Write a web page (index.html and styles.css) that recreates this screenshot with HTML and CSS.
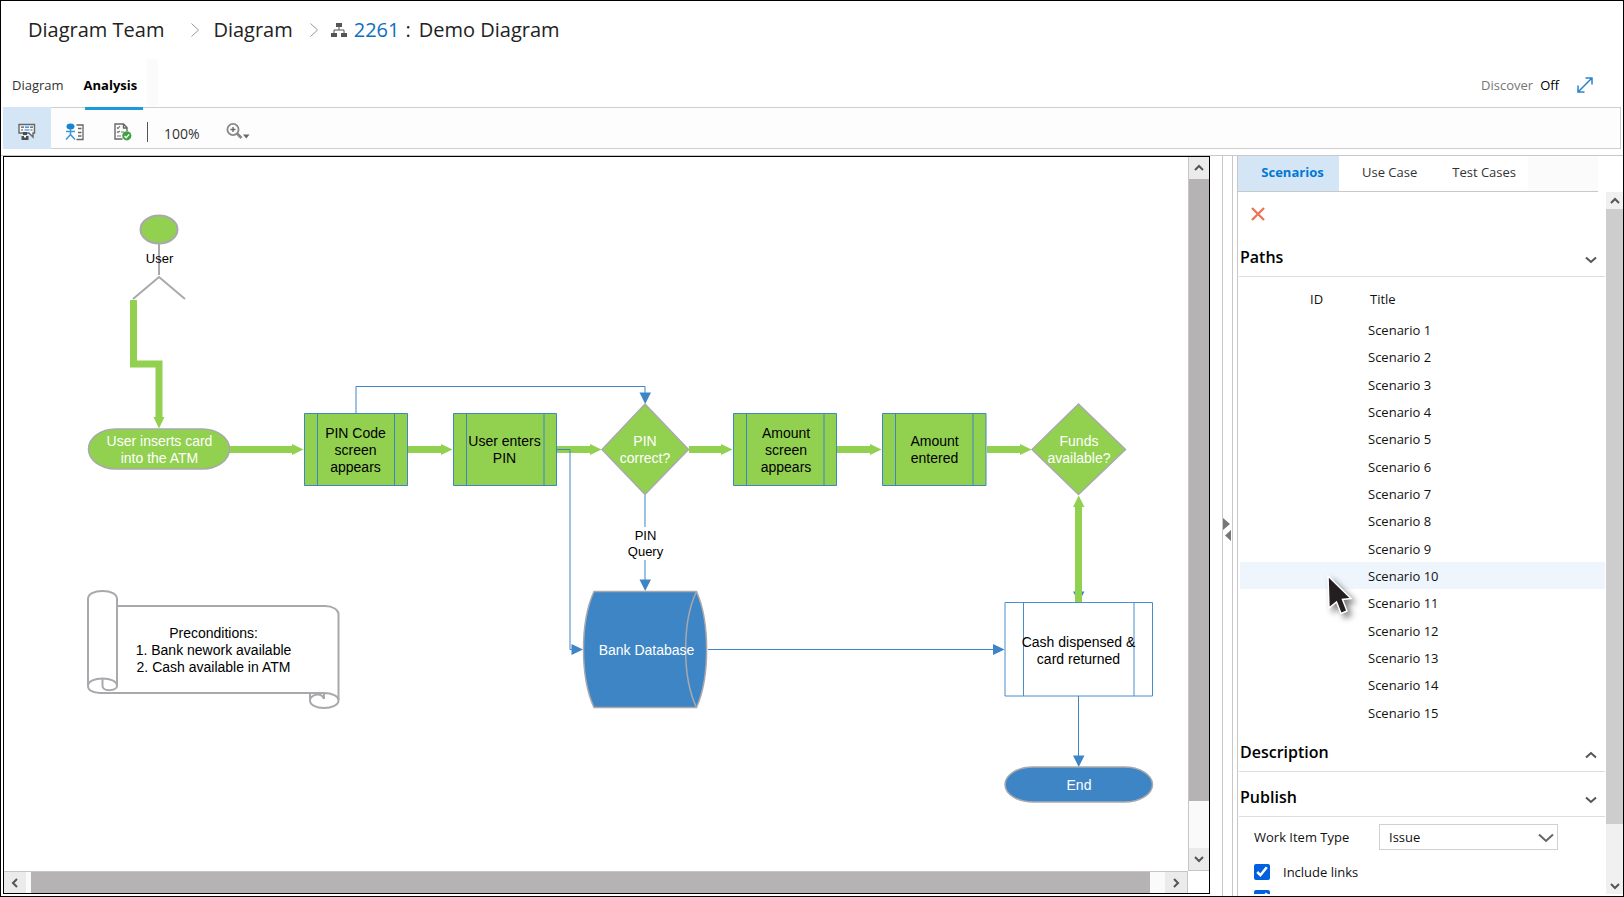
FILE: index.html
```html
<!DOCTYPE html>
<html lang="en">
<head>
<meta charset="utf-8">
<title>2261: Demo Diagram</title>
<link rel="stylesheet" href="styles.css">
</head>
<body>
<div class="frame">
  <header class="crumbs">
    <span class="crumb-team">Diagram Team</span>
    <svg class="crumb-sep" width="10" height="16" viewBox="0 0 10 16"><path d="M1.500 1.500L8.500 8L1.500 14.500"/></svg>
    <span class="crumb-project">Diagram</span>
    <svg class="crumb-sep second" width="10" height="16" viewBox="0 0 10 16"><path d="M1.500 1.500L8.500 8L1.500 14.500"/></svg>
    <svg class="crumb-icon" width="16" height="16" viewBox="0 0 16 16"><path fill="#555" d="M5 1h6v4H5zM0 11h6v4H0zM10 11h6v4h-6z"/><path d="M8 5v3M3 11V8h10v3" fill="none" stroke="#555"/></svg>
    <a class="crumb-id" href="#">2261</a>
    <span class="crumb-colon">:</span>
    <h1 class="crumb-title">Demo Diagram</h1>
  </header>

  <nav class="tabs">
    <a class="tab" href="#">Diagram</a>
    <a class="tab active" href="#">Analysis</a>
    <span class="tab-end"></span>
    <span class="discover">Discover</span>
    <span class="discover-state">Off</span>
    <button class="expand" aria-label="Full screen"><svg width="16" height="16" viewBox="0 0 16 16" fill="none" stroke="#2b83cc" stroke-width="1.500"><path d="M1.500 14.500L14.500 1.500M8.500 1h6.500v6.500M1 8.500V15h6.500"/></svg></button>
  </nav>

  <div class="toolbar">
    <button class="tool selected" aria-label="Scenarios"><svg width="18" height="18" viewBox="0 0 18 18"><path fill="#f4f8fc" stroke="#666" stroke-width="1.400" d="M4 10H1V1.500h15.500V10H15v4l-4-4H4"/><path stroke="#555" stroke-width="1.200" d="M3 4.200h3M12 4.200h3M3 7h2M12.500 7h2"/><path stroke="#1a7fd0" stroke-width="1.200" d="M7 4.200h4M6.500 7h5"/><path fill="#4c4c4c" d="M5 9h4v3H5zM3.500 13h7v4h-7z"/><path fill="#fff" d="M6 13h2v1.500H6z"/></svg></button>
    <button class="tool" aria-label="Use case"><svg width="20" height="18" viewBox="0 0 20 18"><ellipse cx="5.500" cy="3.500" rx="4" ry="3" fill="#1585d3"/><path fill="none" stroke="#3a97d8" stroke-width="1.500" d="M5.500 6v6M1 8.500h9M5.500 11.500L1 16.500M5.500 11.500L10 16.500"/><path fill="none" stroke="#666" stroke-width="1.300" d="M11.500 2H18v14.500h-6.500M13 5.500h3.500M13 9.500h3.500M13 13h3.500"/></svg></button>
    <button class="tool" aria-label="Test cases"><svg width="18" height="18" viewBox="0 0 18 18"><path fill="none" stroke="#666" stroke-width="1.400" d="M8.500 16H1V1h8.500L13 4.500V8M9.500 1v4H13"/><path stroke="#777" stroke-width="1.200" fill="none" d="M3 4.500l1 1L6 3M3 8.500l1 1L6 8M3 13h4M7 9h3"/><circle cx="12.800" cy="12.800" r="4.600" fill="#3fa142"/><path d="M10.500 13l1.700 1.700 3-3.300" fill="none" stroke="#fff" stroke-width="1.400"/></svg></button>
    <span class="tool-divider"></span>
    <span class="zoom-level">100%</span>
    <button class="tool zoom" aria-label="Zoom"><svg width="24" height="18" viewBox="0 0 24 18"><circle cx="7" cy="6.500" r="5.600" fill="none" stroke="#888" stroke-width="1.800"/><path d="M4.500 6.500h5M7 4v5" stroke="#666" stroke-width="1.300"/><path d="M11 10.500l4.500 4.500" stroke="#888" stroke-width="2.800"/><path d="M17 11.500h6.500l-3.200 4z" fill="#666"/></svg></button>
  </div>

  <main class="main">
    <section class="viewer" aria-label="Diagram">
      <div class="canvas">
        <svg class="diagram" width="1184" height="713" viewBox="4 157 1184 713">
          <!-- actor -->
          <g class="actor">
            <path d="M159 244v31M133 299l26-22 26 22"/>
            <ellipse cx="159" cy="229.500" rx="18.500" ry="14"/>
          </g>
          <!-- highlighted path -->
          <g class="flow-line">
            <path d="M133.500 300V364H159V420"/>
            <path d="M229 449.500H294M408 449.500H444M557 449.500H592M689 449.500H723M837 449.500H872M987 449.500H1022"/>
          </g>
          <path class="flow-head" d="M153.500 417h11L159 428.500zM292 444l11.500 5.500-11.500 5.500zM441 444l11.500 5.500-11.500 5.500zM590 444l11.500 5.500-11.500 5.500zM721 444l11.500 5.500-11.500 5.500zM870 444l11.500 5.500-11.500 5.500zM1020 444l11.500 5.500-11.500 5.500z"/>
          <!-- process steps -->
          <g class="process">
            <path d="M304.500 413.500h103v72h-103zM317.500 413.500v72M394.500 413.500v72"/>
            <path d="M453.500 413.500h103v72h-103zM466.500 413.500v72M544 413.500v72"/>
            <path d="M733.500 413.500h103v72h-103zM746.500 413.500v72M824 413.500v72"/>
            <path d="M882.500 413.500h103.500v72h-103.500zM895.500 413.500v72M973 413.500v72"/>
          </g>
          <g class="process plain"><path d="M1005 602.500h147.500v93.500h-147.500zM1023.500 603v93M1134 603v93"/></g>
          <!-- plain connectors -->
          <path class="link" d="M356 413V386.500H645V394M557 449.500H570V649.500H574M645 495v32M645 560v20M708 649.500H994M1078.500 696v60"/>
          <path class="link-head" d="M639.500 392.500h11.500l-5.800 11.500zM639.500 579.500h11.500l-5.800 11.500zM571.500 644l11.500 5.500-11.500 5.500zM993 644l11.500 5.500L993 655zM1073 755.500h11.500l-5.800 11.500zM1073 591.500h11.500l-5.800 11z"/>
          <path class="flow-line" d="M1078.500 602V505"/>
          <path class="flow-head" d="M1073 507h11.500l-5.800-11.500z"/>
          <!-- decisions -->
          <path class="node green" d="M645 404l43.500 45.500-43.500 45-43-45zM1078.500 404l47 45.500-47 45-46.500-45z"/>
          <!-- terminators -->
          <rect class="node green" x="88.500" y="429" width="141" height="40" rx="27" ry="20"/>
          <rect class="node blue" x="1005" y="767" width="147.500" height="35" rx="28" ry="17.500"/>
          <!-- database -->
          <path class="node blue" d="M594 591.500H696.500C710 622 710 677 696.500 707.500H594C580 677 580 622 594 591.500z"/>
          <path class="node hollow" d="M696.500 591.500C682 622 682 677 696.500 707.500"/>
          <!-- preconditions scroll -->
          <g class="scroll-note">
            <path d="M117 606H325C333 606 338.500 610 338.500 614V700"/>
            <path d="M102 693H324C332 693 338.500 696 338.500 700.500S332 708 324 708 310 705 310 700.500V693M324 693v6M310 699c4-6 12-6 14 0"/>
            <path d="M88 686V599C88 594 94 591 102.500 591S117 594 117 599V686C117 691 103 692 102.500 686V679"/>
            <path d="M117 686C117 681 110 678.500 102.500 678.500S88 681 88 686 95 693 104 693"/>
          </g>
          <!-- labels -->
          <g class="label">
            <text x="159.500" y="263" class="small">User</text>
            <text x="355.500" y="438">PIN Code</text><text x="355.500" y="455">screen</text><text x="355.500" y="472">appears</text>
            <text x="504.500" y="446">User enters</text><text x="504.500" y="463">PIN</text>
            <text x="786" y="438">Amount</text><text x="786" y="455">screen</text><text x="786" y="472">appears</text>
            <text x="934.500" y="446">Amount</text><text x="934.500" y="463">entered</text>
            <text x="645.500" y="540" class="small">PIN</text><text x="645.500" y="556" class="small">Query</text>
            <text x="1078.500" y="647">Cash dispensed &amp;</text><text x="1078.500" y="664">card returned</text>
            <text x="213.500" y="638">Preconditions:</text><text x="213.500" y="655">1. Bank nework available</text><text x="213.500" y="672">2. Cash available in ATM</text>
          </g>
          <g class="label light">
            <text x="159.500" y="446">User inserts card</text><text x="159.500" y="463">into the ATM</text>
            <text x="645" y="446">PIN</text><text x="645" y="463">correct?</text>
            <text x="1079" y="446">Funds</text><text x="1079" y="463">available?</text>
            <text x="646.500" y="655">Bank Database</text>
            <text x="1079" y="790">End</text>
          </g>
        </svg>
      </div>
      <div class="vbar">
        <button class="bar-btn" aria-label="Scroll up"><svg width="10" height="8" viewBox="0 0 10 8"><path d="M1 6l4-4 4 4"/></svg></button>
        <div class="bar-track"><div class="bar-thumb"></div></div>
        <button class="bar-btn" aria-label="Scroll down"><svg width="10" height="8" viewBox="0 0 10 8"><path d="M1 2l4 4 4-4"/></svg></button>
      </div>
      <div class="hbar">
        <button class="bar-btn" aria-label="Scroll left"><svg width="8" height="10" viewBox="0 0 8 10"><path d="M6 1l-4 4 4 4"/></svg></button>
        <div class="bar-track"><div class="bar-thumb"></div></div>
        <button class="bar-btn" aria-label="Scroll right"><svg width="8" height="10" viewBox="0 0 8 10"><path d="M2 1l4 4-4 4"/></svg></button>
      </div>
    </section>

    <div class="splitter"><svg width="9" height="24" viewBox="0 0 9 24"><path fill="#777" d="M0 0l7 6-7 6zM8 12v11l-6-5.500z"/></svg></div>

    <aside class="panel">
      <nav class="panel-tabs">
        <a class="ptab current" href="#">Scenarios</a>
        <a class="ptab" href="#">Use Case</a>
        <a class="ptab" href="#">Test Cases</a>
        <span class="ptab-fill"></span>
      </nav>
      <div class="panel-view">
        <div class="panel-body">
          <button class="close" aria-label="Delete"><svg width="14" height="14" viewBox="0 0 14 14"><path d="M1 1l12 12M13 1L1 13" stroke="#ed7354" stroke-width="2.300"/></svg></button>
          <h2 class="section paths"><span>Paths</span><svg width="12" height="8" viewBox="0 0 12 8"><path d="M1 1.500l5 4.500 5-4.500"/></svg></h2>
          <table class="scenarios">
            <thead><tr><th class="col-id">ID</th><th>Title</th></tr></thead>
            <tbody>
              <tr><td></td><td>Scenario 1</td></tr>
              <tr><td></td><td>Scenario 2</td></tr>
              <tr><td></td><td>Scenario 3</td></tr>
              <tr><td></td><td>Scenario 4</td></tr>
              <tr><td></td><td>Scenario 5</td></tr>
              <tr><td></td><td>Scenario 6</td></tr>
              <tr><td></td><td>Scenario 7</td></tr>
              <tr><td></td><td>Scenario 8</td></tr>
              <tr><td></td><td>Scenario 9</td></tr>
              <tr class="hover"><td class="pointer-cell"><svg class="pointer" width="40" height="50" viewBox="0 0 40 50"><path d="M4 2L27 24.500 18.500 25.500 23 37 17 39.500 12.500 28 5 34z" fill="#231f20" stroke="#fff" stroke-width="1.500"/></svg></td><td>Scenario 10</td></tr>
              <tr><td></td><td>Scenario 11</td></tr>
              <tr><td></td><td>Scenario 12</td></tr>
              <tr><td></td><td>Scenario 13</td></tr>
              <tr><td></td><td>Scenario 14</td></tr>
              <tr><td></td><td>Scenario 15</td></tr>
            </tbody>
          </table>
          <h2 class="section"><span>Description</span><svg width="12" height="8" viewBox="0 0 12 8"><path d="M1 6.500L6 2l5 4.500"/></svg></h2>
          <h2 class="section"><span>Publish</span><svg width="12" height="8" viewBox="0 0 12 8"><path d="M1 1.500l5 4.500 5-4.500"/></svg></h2>
          <form class="publish">
            <div class="field">
              <label for="wit">Work Item Type</label>
              <span class="select-wrap"><select id="wit"><option>Issue</option></select><svg width="16" height="10" viewBox="0 0 16 10"><path d="M1 1.500l7 6.500 7-6.500"/></svg></span>
            </div>
            <label class="check"><input type="checkbox" checked>Include links</label>
            <div class="check"><input type="checkbox" checked aria-label="Publish option"></div>
          </form>
        </div>
        <div class="panel-bar">
          <button class="bar-btn" aria-label="Scroll up"><svg width="10" height="8" viewBox="0 0 10 8"><path d="M1 6l4-4 4 4"/></svg></button>
          <div class="bar-track"><div class="bar-thumb"></div></div>
          <button class="bar-btn" aria-label="Scroll down"><svg width="10" height="8" viewBox="0 0 10 8"><path d="M1 2l4 4 4-4"/></svg></button>
        </div>
      </div>
    </aside>
  </main>
</div>
</body>
</html>
```
FILE: styles.css
```css
* { box-sizing: border-box; }
body { margin: 0; font-family: "Segoe UI", "Open Sans", sans-serif; font-size: 13px; color: #111; background: #fff; }
button { border: 0; padding: 0; background: none; display: flex; align-items: center; justify-content: center; }
a { text-decoration: none; color: inherit; }
svg { display: block; flex: none; }
h1, h2 { margin: 0; font-size: inherit; font-weight: normal; }

.frame { height: 100vh; border: 1px solid #000; display: flex; flex-direction: column; overflow: hidden; }

/* breadcrumb */
.crumbs { height: 57px; flex: none; display: flex; align-items: center; padding-left: 27px; font-size: 20px; color: #222; white-space: nowrap; }
.crumb-sep { margin: 0 13px 0 26px; }
.crumb-sep.second { margin: 0 12px 0 16px; }
.crumb-sep path { fill: none; stroke: #999; }
.crumb-icon { margin-right: 7px; }
.crumb-id { color: #106ebe; }
.crumb-colon { margin: 0 8px 0 6px; }

/* top tabs */
.tabs { height: 49px; flex: none; display: flex; align-items: center; padding-left: 11px; position: relative; }
.tab { height: 49px; line-height: 54px; margin-right: 20px; color: #333; }
.tab.active { color: #000; font-weight: bold; margin-right: 0; }
.tab.active::after { content: ""; position: absolute; left: 84px; top: 49px; width: 58px; height: 3px; background: #1b9bd7; }
.tab-end { width: 11px; height: 47px; margin-left: 10px; background: #fbfbfb; }
.discover { margin-left: auto; padding-top: 4px; color: #777; }
.discover-state { margin-left: 7px; padding-top: 4px; color: #000; }
.expand { margin: 4px 30px 0 18px; }

/* toolbar */
.toolbar { height: 42px; flex: none; margin: 0 2px 0 2px; border: 1px solid #cfcfcf; border-left: 0; background: #fdfdfd; display: flex; align-items: center; }
.tool { width: 48px; height: 42px; padding-top: 8px; flex: none; }
.tool.selected { background: #d4e5f5; }
.tool-divider { width: 1px; height: 20px; margin-top: 8px; background: #555; }
.zoom-level { margin: 11px 13px 0 16px; font-size: 14px; color: #333; }
.tool.zoom { width: 50px; }

/* main split */
.main { flex: 1; min-height: 0; margin-top: 6px; border-top: 1px solid #c8c8c8; display: flex; }
.viewer { flex: 1; min-width: 0; margin: 0 12px 2px 2px; border: 1px solid #000; display: grid; grid-template-columns: minmax(0, 1fr) 21px; grid-template-rows: minmax(0, 1fr) 22px; }
.canvas { overflow: hidden; }
.bar-btn { background: #ebebeb; flex: none; }
.bar-btn path { fill: none; stroke: #555; stroke-width: 2; }
.bar-track { flex: 1; background: #fafafa; display: flex; }
.vbar { display: flex; flex-direction: column; border: 1px solid #c5c5c5; border-width: 0 0 1px 1px; }
.vbar .bar-btn { height: 22px; }
.vbar .bar-thumb { width: 100%; height: 93%; background: #b5b3b4; }
.hbar { display: flex; border: 1px solid #c5c5c5; border-width: 1px 1px 0 0; }
.hbar .bar-btn { width: 22px; }
.hbar .bar-thumb { width: 100%; margin-left: 5px; margin-right: 15px; background: #b5b3b4; }
.splitter { width: 11px; flex: none; border: 1px solid #c8c8c8; border-width: 0 1px; margin-right: 4px; padding-top: 8px; display: flex; align-items: center; }

/* side panel */
.panel { width: 386px; flex: none; border-left: 1px solid #c8c8c8; display: flex; flex-direction: column; min-height: 0; }
.panel-tabs { height: 36px; flex: none; margin-right: 25px; border-bottom: 1px solid #c8c8c8; display: flex; line-height: 33px; color: #333; }
.ptab { padding: 0 12px 0 23px; }
.ptab.current { width: 101px; padding: 0 0 0 8px; text-align: center; background: #d4e5f5; color: #0078d4; font-weight: bold; }
.ptab-fill { flex: 1; background: #fbfbfb; }
.panel-view { flex: 1; min-height: 0; display: flex; margin-bottom: 2px; }
.panel-body { flex: 1; min-width: 0; overflow: hidden; }
.panel-bar { width: 17px; flex: none; display: flex; flex-direction: column; }
.panel-bar .bar-btn { height: 17px; background: #f0f0f0; }
.panel-bar .bar-track { background: #f0f0f0; }
.panel-bar .bar-thumb { width: 100%; height: 92%; background: #cdcdcd; }
.close { margin: 15px 0 0 13px; }
.section { height: 45px; display: flex; align-items: center; justify-content: space-between; padding: 6px 8px 0 1px; margin: 0 1px; border-bottom: 1px solid #ddd; font-size: 16px; line-height: 24px; font-weight: 600; color: #000; }
.section.paths { height: 56px; padding-top: 16px; }
.section path { fill: none; stroke: #555; stroke-width: 2; }
.section svg { margin-top: 6px; }

.scenarios { width: calc(100% - 3px); margin-left: 2px; border-collapse: collapse; table-layout: fixed; }
.scenarios th { height: 39px; padding: 4px 0 0 2px; font-weight: normal; text-align: left; }
.scenarios .col-id { width: 128px; padding-left: 70px; }
.scenarios td { height: 27px; padding: 0; line-height: 20px; }
.scenarios tr:nth-child(3n + 2) td { height: 28px; }
.scenarios tr:last-child td { height: 28px; }
.hover { background: #eef5fc; }
.pointer-cell { position: relative; }
.pointer { position: absolute; left: 84px; top: 12px; filter: drop-shadow(4px 4px 3px rgba(0, 0, 0, .5)); }

.publish { padding: 7px 0 0 16px; }
.field { display: flex; align-items: center; height: 26px; margin-bottom: 14px; }
.field label { width: 125px; }
.select-wrap { position: relative; width: 179px; height: 26px; }
.select-wrap select { appearance: none; width: 100%; height: 100%; padding: 0 9px; border: 1px solid #d0d0d0; border-radius: 0; background: #fff; color: #111; font: inherit; }
.select-wrap svg { position: absolute; right: 4px; top: 9px; pointer-events: none; }
.select-wrap path { fill: none; stroke: #666; stroke-width: 2; }
.check { display: flex; align-items: center; height: 16px; margin-bottom: 10px; white-space: nowrap; }
.check input { width: 16px; height: 16px; margin: 0 13px 0 0; accent-color: #0060df; }

/* diagram */
.actor path, .actor ellipse { fill: none; stroke: #a9a9ad; stroke-width: 2; }
.actor ellipse { fill: #92d050; }
.flow-line { fill: none; stroke: #92d050; stroke-width: 7; }
.flow-head { fill: #92d050; }
.process { fill: #92d050; stroke: #3e85c6; stroke-width: 1; }
.process.plain { fill: #fff; stroke: #4a8dcb; }
.link { fill: none; stroke: #3e85c6; stroke-width: 1; }
.link-head { fill: #3e85c6; }
.node { stroke: #a9a9ad; stroke-width: 1.5; }
.node.green { fill: #92d050; }
.node.blue { fill: #3e85c6; }
.node.hollow { fill: none; }
.scroll-note { fill: none; stroke: #a9a9ad; stroke-width: 2; }
.label { font-family: Arial, "Liberation Sans", sans-serif; font-size: 14px; text-anchor: middle; fill: #000; }
.label .small { font-size: 13px; }
.label.light { fill: #fff; }
```
